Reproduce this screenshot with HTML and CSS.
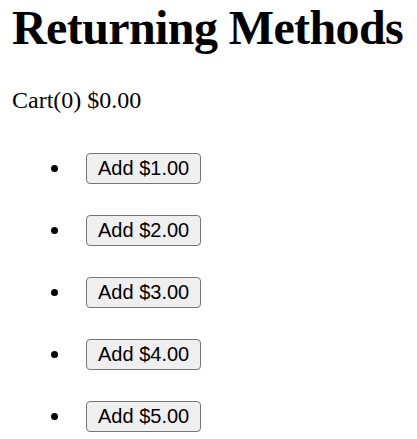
FILE: index.html
```html
<!DOCTYPE html>
<html lang="en">
  <head>
    <meta charset="UTF-8" />
    <meta name="viewport" content="width=device-width, initial-scale=1.0" />
    <title>Returning Methods</title>
    <link rel="stylesheet" href="styles.css">
  </head>
  <body>
    <h1>Returning Methods</h1>
    <p class="cart">Cart(0) $0.00</p>
    <ul class="items">
      <li><button type="button">Add $1.00</button></li>
      <li><button type="button">Add $2.00</button></li>
      <li><button type="button">Add $3.00</button></li>
      <li><button type="button">Add $4.00</button></li>
      <li><button type="button">Add $5.00</button></li>
    </ul>
  </body>
</html>
```

FILE: styles.css
```css
html {
  overflow: hidden;
}
body {
  margin: 0 12px;
  font-family: "Liberation Serif", serif;
  color: black;
  background: white;
}
h1 {
  font-size: 48px;
  margin: 0 0 32px;
  white-space: nowrap;
  letter-spacing: -0.6px;
}
.cart {
  font-size: 24px;
  margin: 0;
}
.items {
  margin: 39px 0 0;
  padding-left: 60px;
}
.items li {
  font-size: 24px;
  line-height: 31px;
  height: 31px;
}
.items li + li {
  margin-top: 31px;
}
.items button {
  vertical-align: top;
  margin: 0 0 0 14px;
  height: 31px;
  padding: 0 11px;
  font-family: "Liberation Sans", Arial, sans-serif;
  font-size: 20px;
  color: black;
  background-color: #efefef;
  border: 1px solid #767676;
  border-radius: 4px;
}
```
